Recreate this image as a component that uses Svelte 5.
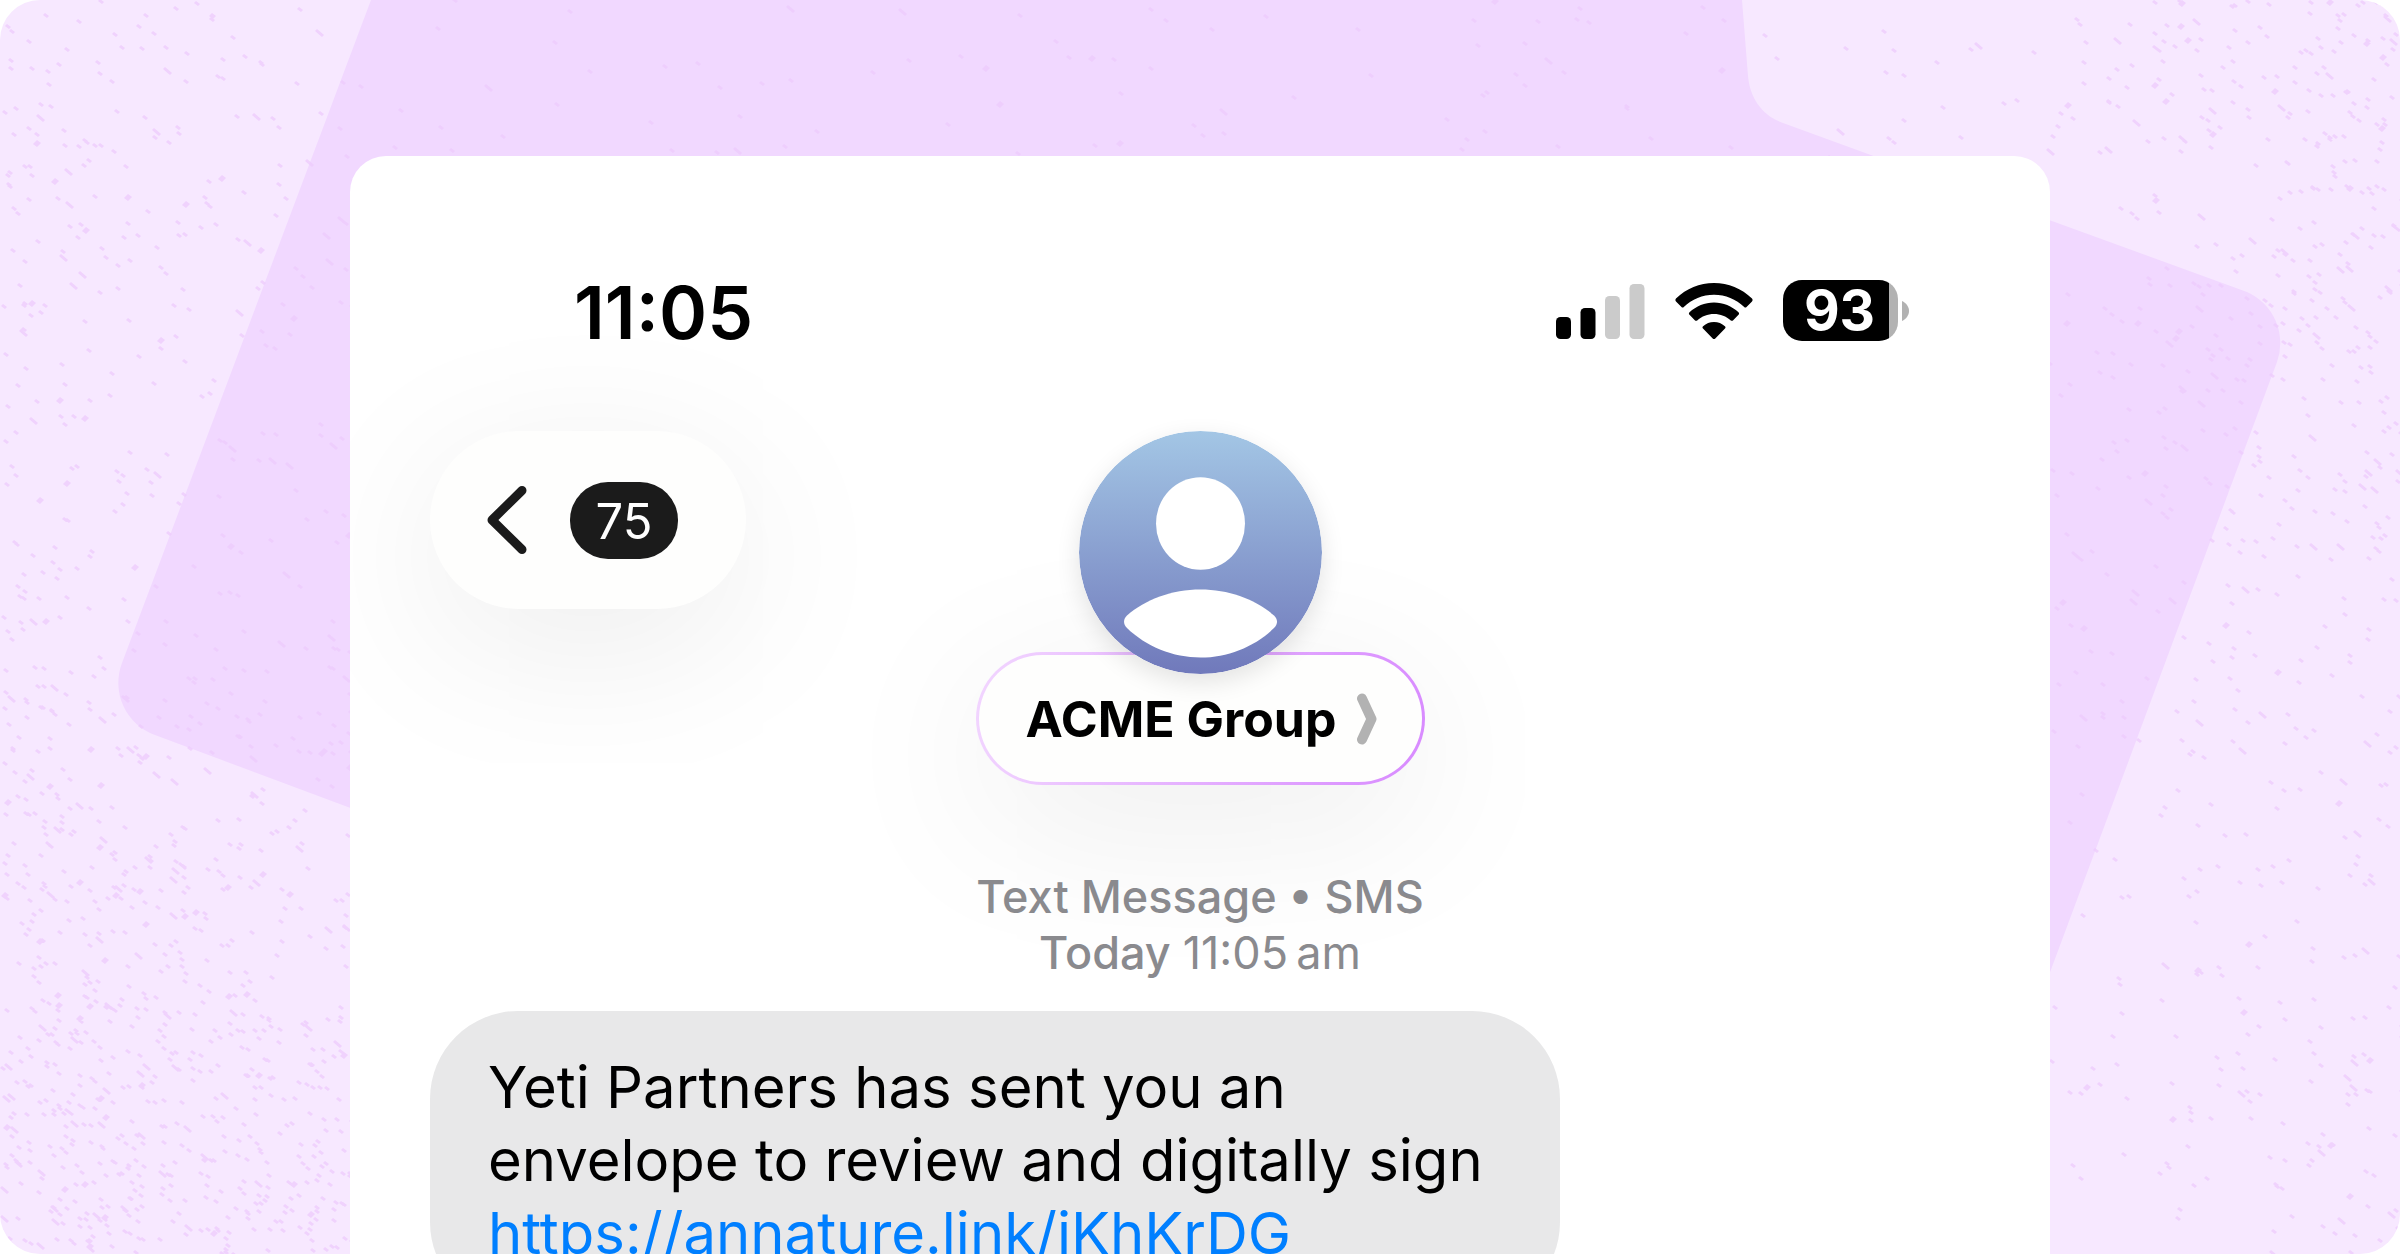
<script>
  const bars = [22, 31, 43, 55];
  const level = 2;

  // Small deterministic generator, so the paper grain is stable between renders.
  function generator(seed) {
    let s = seed;
    return () => {
      s = (s + 0x6d2b79f5) | 0;
      let t = Math.imul(s ^ (s >>> 15), 1 | s);
      t = (t + Math.imul(t ^ (t >>> 7), 61 | t)) ^ t;
      return ((t ^ (t >>> 14)) >>> 0) / 4294967296;
    };
  }

  // Grain is heaviest in the lower left and upper right corners.
  function density(x, y) {
    const left = Math.max(0, 1 - x / 420);
    const right = Math.max(0, 1 - (2400 - x) / 420);
    const low = Math.max(0, (y - 600) / 654);
    const high = Math.max(0, 1 - y / 900);
    if (x < 1200) return 0.06 + left * 0.2 + low * (0.35 + left * 0.6);
    return 0.06 + right * (0.12 + high * 0.4);
  }

  function grain() {
    const rand = generator(7);
    let d = '';
    for (let i = 0; i < 21000; i++) {
      const x = Math.round(rand() * 2400);
      const y = Math.round(rand() * 1254);
      const keep = rand();
      const kind = rand();
      if (x > 360 && x < 2040 && y > 170) continue;
      if (keep > density(x, y)) continue;
      if (kind < 0.86) d += `M${x} ${y}l2-2 4 3-2 2z`;
      else if (kind < 0.95) d += `M${x} ${y}l2-2 7 6-2 2z`;
      else d += `M${x} ${y}l4-4 4 3-4 4z`;
    }
    return d;
  }

  const speckles = grain();
</script>

<main class="stage">
  <svg class="backdrop" viewBox="0 0 2400 1254" preserveAspectRatio="xMidYMin slice" aria-hidden="true">
    <path
      class="sheet"
      d="M371 0H1742L1748 76C1750 99 1763 116 1783 123L2247 292A56 56 0 0 1 2277 362L2049 975L1400 1200L155 735A56 56 0 0 1 122 663Z"
    />
    <path class="speckle" d={speckles} />
  </svg>

  <section class="phone">
    <div class="status">
      <time class="clock" datetime="11:05">11:05</time>
      <div class="indicators">
        <svg class="signal" viewBox="0 0 89 56" aria-label="Signal" role="img">
          {#each bars as h, i}
            <rect x={i * 24.5} y={56 - h} width="15" height={h} rx="4.5" class:off={i >= level} />
          {/each}
        </svg>
        <svg class="wifi" viewBox="0 0 78 58" aria-label="Wi-Fi" role="img">
          <path d="M1 19.500C.2 18.700.2 17.300 1 16.500C11.500 6.500 24.500 1 39 1S66.500 6.500 77 16.500C77.800 17.300 77.800 18.700 77 19.500L71.500 25C70.800 25.700 69.900 25.700 69.200 25C61 17.200 50.500 12.800 39 12.800S17 17.200 8.800 25C8.100 25.700 7.200 25.700 6.500 25Z" />
          <path d="M14.500 32.800C13.700 32 13.700 31 14.500 30.200C21.200 24 29.700 20.400 39 20.400S56.800 24 63.500 30.200C64.300 31 64.300 32 63.500 32.800L58.200 38.300C57.500 39 56.500 39 55.800 38.400C51.200 34.400 45.400 32 39 32S26.800 34.400 22.200 38.400C21.500 39 20.500 39 19.800 38.300Z" />
          <path d="M28 46.500C27.300 45.800 27.300 44.800 28.100 44.200C31.100 41.600 34.800 40 39 40S46.900 41.600 49.900 44.200C50.700 44.800 50.700 45.800 50 46.500L40.300 56.500C39.500 57.300 38.500 57.300 37.700 56.500Z" />
        </svg>
        <div class="battery">
          <span class="charge">93</span>
          <svg class="nub" viewBox="0 0 7 20" aria-hidden="true"><path d="M0 0C4 2 7 5.500 7 10S4 18 0 20Z" /></svg>
        </div>
      </div>
    </div>

    <header class="header">
      <button class="back" aria-label="Back, 75 unread">
        <svg class="arrow" viewBox="0 0 40 68" aria-hidden="true"><path d="M35 4.500L5 34L35 63.500" /></svg>
        <span class="count">75</span>
      </button>
      <div class="contact">
        <svg class="avatar" viewBox="0 0 243 243" aria-hidden="true">
          <defs>
            <linearGradient id="sky" x1="0" y1="0" x2="0" y2="1">
              <stop offset="0" stop-color="#a3c6e5" />
              <stop offset="1" stop-color="#7079bb" />
            </linearGradient>
          </defs>
          <circle cx="121.500" cy="121.500" r="121.500" fill="url(#sky)" />
          <ellipse cx="121.500" cy="92.500" rx="44.500" ry="46.300" fill="#fff" />
          <path
            fill="#fff"
            d="M48 184.500C66 168.500 93 158.500 121.500 158.500S177 168.500 195 184.500C199 188.500 199 193 195 197C176 215.500 149 226.500 121.500 226.500S67 215.500 48 197C44 193 44 188.500 48 184.500Z"
          />
        </svg>
        <button class="name">
          ACME Group
          <svg class="more" viewBox="0 0 20 52" aria-hidden="true"><path d="M5 5.500L14.500 26L5 46.500" /></svg>
        </button>
      </div>
    </header>

    <p class="meta">
      Text Message • SMS<br />
      Today <span class="when">11:05&#8201;am</span>
    </p>

    <p class="bubble">
      Yeti Partners has sent you an<br />
      envelope to review and digitally sign<br />
      <a href="https://annature.link/iKhKrDG">https://annature.link/iKhKrDG</a>
    </p>
  </section>
</main>

<style>
  :global(body) {
    background: #fff;
  }

  .stage {
    position: relative;
    box-sizing: border-box;
    height: 100vh;
    padding: 156px 350px 0;
    overflow: hidden;
    border-radius: 40px;
    background: #f7e8ff;
    font-family: Inter, 'Liberation Sans', sans-serif;
  }

  .backdrop {
    position: absolute;
    inset: 0;
    width: 100%;
    height: 100%;
  }

  .sheet {
    fill: #f1d8ff;
  }

  .speckle {
    fill: #eeccfd;
    fill-opacity: 0.8;
  }

  .phone {
    position: relative;
    box-sizing: border-box;
    min-height: 100%;
    padding: 112px 80px 80px;
    overflow: hidden;
    border-radius: 36px 36px 0 0;
    background: #fff;
  }

  .status {
    display: flex;
    align-items: flex-start;
    justify-content: space-between;
    height: 88px;
    padding: 0 61px 0 144px;
  }

  .clock {
    font-size: 73px;
    font-weight: 600;
    line-height: 90px;
  }

  .indicators {
    display: flex;
    align-items: center;
    gap: 30px;
    height: 85px;
  }

  .signal {
    width: 89px;
    height: 56px;
  }

  .signal .off {
    fill: #cbcbcb;
  }

  .wifi {
    width: 78px;
    height: 58px;
  }

  .battery {
    display: flex;
    align-items: center;
    gap: 4px;
  }

  .charge {
    box-sizing: border-box;
    width: 115px;
    height: 61px;
    padding-right: 2px;
    border-radius: 19px;
    background: linear-gradient(to right, #000 106px, #b2b2b2 106px);
    color: #fff;
    font-size: 55px;
    font-weight: 700;
    line-height: 61px;
    text-align: center;
  }

  .nub {
    width: 7px;
    height: 20px;
    fill: #b2b2b2;
  }

  .header {
    display: grid;
    grid-template-columns: 1fr auto 1fr;
    align-items: start;
    margin-top: 75px;
  }

  button {
    margin: 0;
    border: 0;
    font-family: inherit;
    cursor: pointer;
  }

  .back {
    display: flex;
    align-items: center;
    justify-self: start;
    gap: 43px;
    height: 178px;
    padding: 0 68px 0 57px;
    border-radius: 89px;
    background: #fefefd;
    box-shadow: 0 36px 170px rgba(0, 0, 0, 0.08);
  }

  .arrow {
    width: 40px;
    height: 68px;
    fill: none;
    stroke: #1b1b1b;
    stroke-width: 9;
    stroke-linecap: round;
    stroke-linejoin: round;
  }

  .count {
    width: 108px;
    height: 77px;
    border-radius: 38px;
    background: #1b1b1b;
    color: #fff;
    font-size: 49px;
    line-height: 79px;
    text-align: center;
  }

  .contact {
    display: flex;
    flex-direction: column;
    align-items: center;
  }

  .avatar {
    position: relative;
    z-index: 1;
    width: 243px;
    height: 243px;
    border-radius: 50%;
    box-shadow: 0 8px 24px rgba(0, 0, 0, 0.11);
  }

  .name {
    display: flex;
    align-items: center;
    gap: 20px;
    height: 133px;
    margin-top: -22px;
    padding: 0 45px 0 47px;
    border: 3px solid transparent;
    border-radius: 67px;
    background:
      linear-gradient(#fefefd, #fefefd) padding-box,
      linear-gradient(100deg, #f2d6ff, #d88aff) border-box;
    box-shadow: 0 36px 170px rgba(0, 0, 0, 0.08);
    color: #000;
    font-size: 50px;
    font-weight: 700;
  }

  .more {
    width: 20px;
    height: 52px;
    fill: none;
    stroke: #b2b2b2;
    stroke-width: 10;
    stroke-linecap: round;
    stroke-linejoin: round;
  }

  .meta {
    position: relative;
    margin: 84px 0 0;
    color: #8a8a8e;
    font-size: 45px;
    font-weight: 500;
    line-height: 56px;
    text-align: center;
  }

  .when {
    font-weight: 400;
  }

  .bubble {
    position: relative;
    box-sizing: border-box;
    width: fit-content;
    min-width: 1130px;
    margin: 30px 0 0;
    padding: 40px 58px;
    border-radius: 88px;
    background: #e8e8e9;
    color: #000;
    font-size: 58px;
    line-height: 73px;
  }

  .bubble a {
    color: #007fff;
    text-decoration: none;
  }
</style>
